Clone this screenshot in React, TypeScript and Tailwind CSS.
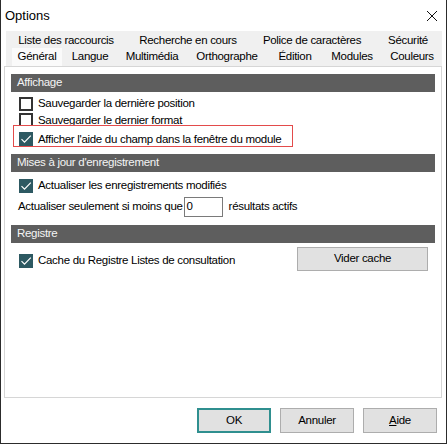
import React from "react";

function Box({ checked }: { checked?: boolean }) {
  if (checked) {
    return (
      <div className="w-[14px] h-[14px] bg-[#2d5962] flex items-center justify-center shrink-0">
        <svg width="12" height="12" viewBox="0 0 12 12">
          <path d="M1.5 6.2 L4.5 9.2 L10.8 2.6" fill="none" stroke="#ffffff" strokeWidth="1.2" />
        </svg>
      </div>
    );
  }
  return <div className="w-[14px] h-[14px] border-2 border-[#333333] bg-white shrink-0" />;
}

function Header({ children }: { children: React.ReactNode }) {
  return (
    <div className="h-[18px] bg-[#5e5e5e] text-[#f4f4f4] pl-[6px] flex items-center leading-none whitespace-nowrap">
      {children}
    </div>
  );
}

function Btn({ children, primary }: { children: React.ReactNode; primary?: boolean }) {
  return (
    <div
      className={
        "w-[74px] h-[25px] bg-[#e1e1e1] flex items-center justify-center text-black " +
        (primary ? "border-2 border-[#2f8f8f]" : "border border-[#adadad]")
      }
    >
      {children}
    </div>
  );
}

export default function App() {
  return (
    <div
      className="w-[447px] h-[444px] bg-white border-l border-r border-b border-[#2c2c2c] text-[11.5px] tracking-[-0.3px] text-black flex flex-col whitespace-nowrap"
      style={{ fontFamily: '"Liberation Sans", Arial, sans-serif' }}
    >
      <div className="h-[31px] flex items-center justify-between pl-[4px] pr-[8px] shrink-0">
        <span className="text-[13px] tracking-normal">Options</span>
        <svg width="12" height="12" viewBox="0 0 12 12">
          <path d="M1 1 L11 11 M11 1 L1 11" stroke="#111" strokeWidth="1" />
        </svg>
      </div>
      <div className="ml-[3px] w-[438px] flex flex-col">
        <div className="ml-[2px] bg-[#f0f0f0] h-[35px] flex flex-col">
          <div className="h-[17px] pt-[2px] flex items-center leading-none">
            <span className="w-[120px] text-center">Liste des raccourcis</span>
            <span className="w-[124px] text-center">Recherche en cours</span>
            <span className="w-[124px] text-center">Police de caractères</span>
            <span className="w-[68px] text-center">Sécurité</span>
          </div>
          <div className="h-[18px] flex items-stretch leading-none">
            <div className="ml-[6px] w-[50px] bg-[#fafafa] flex items-center justify-center">Général</div>
            <span className="w-[56px] flex items-center justify-center">Langue</span>
            <span className="w-[68px] flex items-center justify-center">Multimédia</span>
            <span className="w-[82px] flex items-center justify-center">Orthographe</span>
            <span className="w-[54px] flex items-center justify-center">Édition</span>
            <span className="w-[60px] flex items-center justify-center">Modules</span>
            <span className="w-[60px] flex items-center justify-center">Couleurs</span>
          </div>
        </div>
        <div className="h-[332px] border border-[#d6d6d6] bg-white px-[6px] pt-[7px] flex flex-col">
          <Header>Affichage</Header>
          <div className="flex flex-col pl-[8px] pt-[5px]">
            <div className="h-[14px] flex items-center gap-[5px]">
              <Box />
              <span>Sauvegarder la dernière position</span>
            </div>
            <div className="h-[12px] mt-[2px] flex items-start gap-[5px] overflow-hidden">
              <Box />
              <span className="leading-[14px]">Sauvegarder le dernier format</span>
            </div>
          </div>
          <div className="ml-[2px] w-[280px] h-[22px] border border-[#e34b4b] flex items-end gap-[5px] pl-[5px]">
            <Box checked />
            <span className="leading-[14px]">Afficher l'aide du champ dans la fenêtre du module</span>
          </div>
          <div className="mt-[7px]">
            <Header>Mises à jour d'enregistrement</Header>
          </div>
          <div className="pl-[8px] mt-[7px] h-[14px] flex items-center gap-[5px]">
            <Box checked />
            <span>Actualiser les enregistrements modifiés</span>
          </div>
          <div className="pl-[7px] mt-[4px] h-[20px] flex items-center">
            <span>Actualiser seulement si moins que</span>
            <div className="w-[39px] h-[20px] border border-[#7a7a7a] bg-white ml-px flex items-center pl-[2px]">0</div>
            <span className="ml-[6px]">résultats actifs</span>
          </div>
          <div className="mt-[8px]">
            <Header>Registre</Header>
          </div>
          <div className="flex items-start mt-[4px]">
            <div className="pl-[8px] pt-[5px] flex items-center gap-[5px] w-[286px]">
              <Box checked />
              <span>Cache du Registre Listes de consultation</span>
            </div>
            <div className="w-[131px] h-[24px] bg-[#e1e1e1] border border-[#adadad] flex items-center justify-center">
              Vider cache
            </div>
          </div>
        </div>
      </div>
      <div className="flex justify-end gap-[9px] pr-[9px] mt-[10px]">
        <Btn primary>OK</Btn>
        <Btn>Annuler</Btn>
        <Btn>
          <span>
            <span className="underline">A</span>ide
          </span>
        </Btn>
      </div>
    </div>
  );
}
